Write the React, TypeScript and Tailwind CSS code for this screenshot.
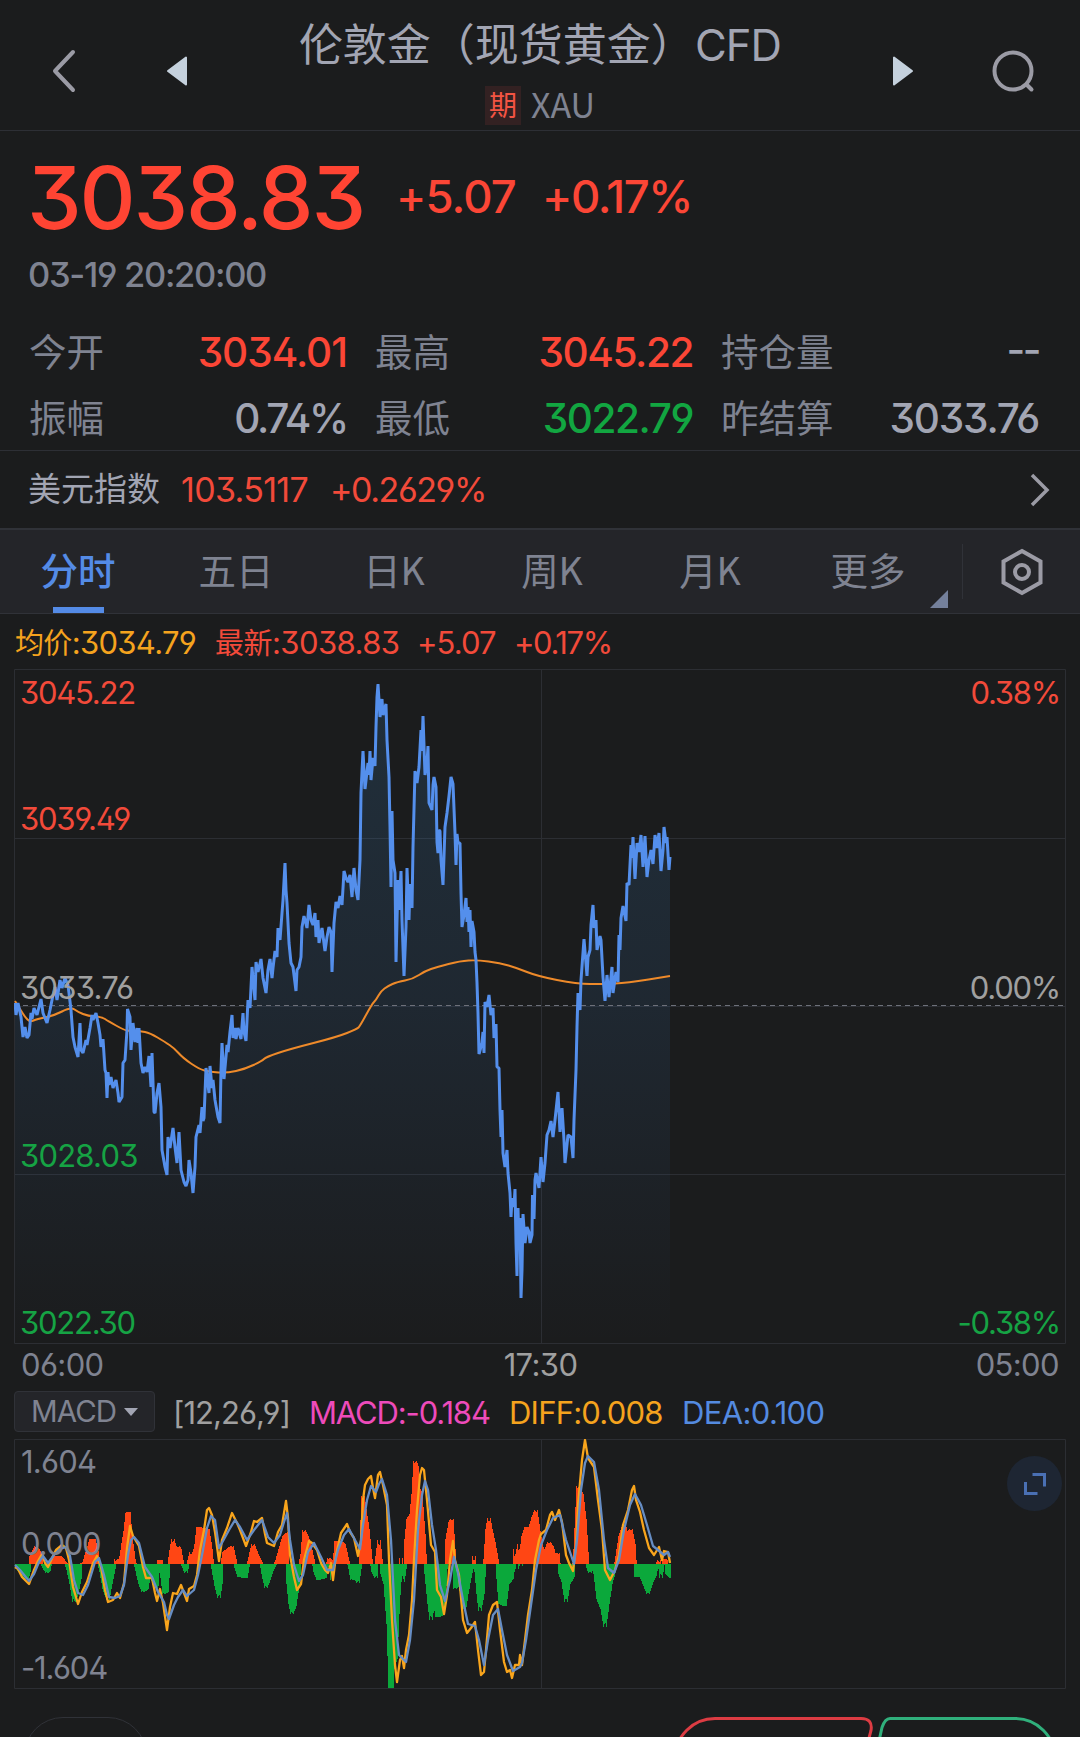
import { ReactNode } from 'react'
import clsx from 'clsx'

type Point = [number, number]

const parse = (s: string): Point[] => s.trim().split(/\s+/).map((p) => p.split(',').map(Number) as Point)

const PRICE = parse(`
15,1003 16,1015 18,1003 21,1017 23,1037 25,1027 27,1038 29,1035 31,1013 32,1019 34,1008 37,1015 41,999 43,1013
47,1023 50,1010 53,995 55,987 57,1000 60,980 62,988 65,978 68,985 69,993 71,1010 73,1037 75,1047 78,1057 80,1023
81,1050 83,1053 86,1040 87,1045 90,1028 92,1015 93,1020 96,1013 98,1023 100,1035 101,1047 103,1039 105,1070
106,1073 107,1098 108,1072 109,1085 111,1077 113,1088 116,1080 118,1093 119,1102 122,1097 123,1063 125,1060
127,1030 127.5,1009 130,1017 131,1050 133,1023 135,1042 137,1028 138,1043 139,1028 141,1063 143,1073 145,1067
147,1072 149,1056 151,1087 152,1053 154,1112 155,1113 157,1093 159,1083 161,1107 162,1150 165,1167 167,1175
168,1137 170,1148 173,1128 175,1147 177,1163 179,1132 181,1170 184,1182 186,1186 188,1180 189,1160 191,1173
193,1193 195,1167 196,1137 199,1125 200,1133 202,1107 203,1121 204,1118 206,1068 209,1093 210,1066 212,1088
213,1080 215,1100 218,1117 220,1123 221,1070 222,1043 224,1079 227,1045 228,1052 230,1032 232,1015 233,1038
235,1028 236,1039 238,1028 241,1039 243,1013 244,1032 246,1041 248,1000 250,1008 252,967 255,1000 256,962 258,972
261,959 263,978 266,993 268,970 270,959 272,978 273,968 275,951 277,957 278,928 280,940 282,913 283,900 285,863
286,890 287,903 289,943 291,963 293,967 296,991 297,970 299,967 301,957 302,927 304,916 307,928 309,905 311,920
313,925 315,913 316,937 318,920 319,943 322,928 325,951 327,937 329,927 331,932 332,972 334,923 336,902 338,908
340,896 342,905 344,871 346,878 348,882 350,875 352,897 354,868 356,890 358,900 360,860 361,793 363,751 365,789
368,763 369,775 370,751 371,780 373,758 375,766 376,727 377,697 378,684 380,717 382,699 383,715 386,704 387,740
389,777 390,827 391,887 392,811 393,860 395,873 396,962 398,880 399,910 401,871 402,920 404,976 406,927 407,868
409,920 410,884 412,908 413,847 415,771 417,783 419,767 421,730 422,751 423,716 425,775 427,763 428,746 429,803
432,810 433,785 434,777 436,787 437,842 438,853 439,830 440,831 441,860 443,885 445,827 447,813 449,796 451,777
453,784 455,833 456,865 457,834 458,843 460,843 461,893 462,927 464,915 466,898 467,922 468,907 469,932 470,910
471,947 472,921 474,932 475,952 476,960 477,983 478,1013 479,1054 482,1043 483,1032 484,1053 485,1002 487,1007
489,995 491,1015 493,1008 494,1038 496,1024 497,1067 499,1068 500,1110 501,1137 502,1110 503,1153 505,1167
507,1150 508,1173 510,1193 511,1217 512,1198 514,1207 515,1189 516,1243 517,1276 518,1208 519,1247 520,1218
521,1298 522,1270 523,1214 525,1243 527,1227 529,1232 530,1243 532,1235 532.5,1195 534,1219 535,1180 536,1173
539,1188 541,1157 543,1182 545,1163 547,1135 549,1130 551,1121 553,1137 555,1120 558,1092 560,1132 562,1108
564,1140 565,1163 568,1135 571,1137 573,1158 574,1120 576,1070 577,1027 578,993 580,1010 581,980 584,939 587,976
588,957 590,950 591,925 593,905 594,928 596,920 597,950 600,936 601,940 603,977 605,1001 607,975 609,997 612,967
613,993 616,972 618,982 619,935 620,950 621,918 623,906 626,921 627,883 629,885 631,845 632,858 633,837 635,879
637,843 639,852 641,835 643,867 645,836 647,877 649,860 651,850 653,864 655,835 657,848 659,833 661,871 663,850
664,827 666,843 667,837 669,870 670,857`)

const AVERAGE = parse(`
15,1001 20,1009 25,1017 30,1022 37,1019 53,1016 71,1007 78,1012 88,1016 102,1017 108,1021 124,1030 130,1031
140,1031 150,1033 165,1042 174,1048 183,1058 199,1069 210,1072 227,1073 245,1069 262,1061 266,1057 290,1049
337,1037 357,1029 360,1026 372,1004 376,1000 381,991 388,986 397,982 413,979 425,971 437,967 460,961 477,960
500,963 517,968 537,976 577,984 603,984 627,983 670,976`)

// histogram heights, positive is above the zero line
const HISTOGRAM = parse(`
15,-1 17,-4 20,-8 25,-14 27,-15 29,-8 31,8 36,18 40,11 42,0 44,-4 47,-9 49,-7 51,4 54,8 60,8 66,1 68,-6 71,-20
74,-38 77,-30 80,-15 81,0 84,2 88,15 91,25 94,25 97,13 99,0 101,-8 104,-25 108,-36 111,-20 114,-5 116,5 118,0
121,8 125,33 127,51 129,52 131,28 134,5 136,-3 140,-20 143,-28 147,-25 149,-13 151,-9 155,-25 157,-22 159,4
161,4 161.5,-10 164,-30 167,-28 169,0 171,14 173,25 176,12 178,18 180,15 183,-2 186,-9 188,0 191,12 193,5 196,20
198,37 203,36 208,35 211,15 213,-5 216,-22 219,-34 221,-20 222,0 224,12 228,15 232,18 235,5 236,-4 239,-13
246,-14 248,-3 249,3 253,20 257,10 261,2 263,-10 266,-24 269,-16 272,-7 275,-1 277,4 280,15 284,28 287.5,32
288,-20 290,-40 292,-50 295,-42 298,-22 300,0 302,10 304,34 307,28 309,22 313,5 315,-8 318,-16 325,-14 327,-3
329,6 331,4 332,-16 334,-2 336,23 340,23 344,20 348,3 350,-5 352,-16 355,-14 358,-19 360,-5 361,20 363,68 365,55
368,35 371,5 373,-8 376,-14 377,8 379,24 381,5 382,-10 385,-20 388,-60 390,-124 392,-124 393,-105 396,-95
398,-50 400,-12 401,6 403,-18 405,-5 406,25 408,45 411,50 413,70 415,103 417,98 419,75 421,70 424,30 426,-10
429,-40 431,-56 434,-35 437,-53 441,-52 444,-38 446,-5 447,25 450,42 452,45 454,15 455,-25 459,-20 462,-30
464,-50 467,-30 470,-14 473,0 474,8 476,-8 478,-30 480,-47 483,-30 485,5 487,35 489,46 491,35 494,22 497,5
498,-15 500,-40 505,-42 508,-20 512,-15 514,0 515,15 517,-5 519,20 521,-2 523,28 526,37 530,36 533,47 536,54
538,40 541,20 544,10 549,22 552,18 555,8 558,11 560,-10 563,-18 566,-38 569,-20 573,-13 575,15 578,78 582,70
585,45 588,-4 590,-9 593,-3 595,-10 598,-35 602,-45 605,-63 608,-40 611,-20 615,-5 617,8 620,28 624,40 627,30
631,35 634,20 636,-13 641,-12 645,-22 648,-30 652,-18 655,-12 657,-1 659,4 661,-14 664,5 666,4 667,-10 671,-14`)

const DIFF = parse(`
15,1567 18,1569 22,1577 29,1584 34,1570 38,1561 42,1554 45,1563 48,1567 53,1556 56,1550 62,1545 66,1548 69,1560
73,1587 78,1604 82,1592 87,1582 93,1563 97,1556 101,1567 105,1590 108,1602 113,1600 117,1593 120,1598 124,1583
127,1548 130,1526 133,1536 139,1546 143,1567 146,1578 152,1578 155,1593 157,1601 160,1589 163,1603 167,1630
170,1607 173,1593 177,1594 181,1585 184,1593 187,1601 189,1589 194,1586 197,1575 200,1550 204,1530 207,1510
209,1508 212,1515 215,1532 219,1561 222,1540 227,1528 232,1513 237,1523 240,1530 246,1546 251,1532 254,1521
257,1522 262,1518 265,1534 267,1543 274,1546 278,1532 282,1525 286,1501 288,1518 290,1555 294,1577 297,1590
301,1584 304,1560 309,1541 312,1543 317,1550 321,1563 325,1570 328,1573 331,1563 333,1580 336,1555 341,1533
347,1524 350,1532 354,1538 358,1556 361,1540 363,1500 365,1485 368,1479 371,1476 373,1488 375,1498 378,1475
380,1472 383,1485 387,1505 389,1560 392,1620 395,1665 397,1682 400,1660 402,1656 404,1668 406,1650 409,1635
412,1600 414,1560 417,1510 420,1475 422,1468 424,1470 427,1500 431,1545 435,1552 437,1590 441,1597 444,1614
447,1595 450,1560 453,1541 455,1560 459,1575 463,1620 467,1633 471,1628 475,1622 478,1650 481,1675 484,1672
486,1650 489,1615 493,1605 497,1602 500,1630 504,1662 507,1672 510,1670 512,1678 515,1665 519,1665 520,1655
522,1665 525,1640 528,1615 532,1590 535,1560 539,1540 541,1534 546,1530 550,1515 552,1512 555,1520 559,1510
562,1522 566,1555 569,1563 573,1571 576,1545 578,1505 582,1460 585,1440 588,1458 594,1467 598,1500 602,1530
605,1570 610,1580 615,1570 619,1555 623,1525 628,1510 632,1490 634,1486 636,1500 640,1512 644,1530 649,1548
654,1555 659,1547 662,1560 664,1551 668,1552 670,1563`)

const DEA = parse(`
15,1565 20,1570 29,1581 34,1574 39,1562 43,1556 48,1563 54,1555 60,1549 66,1547 70,1556 74,1580 78,1593 83,1595
88,1585 95,1562 99,1558 104,1575 109,1597 115,1598 120,1596 124,1585 128,1555 131,1540 134,1537 139,1543
145,1567 152,1577 158,1592 164,1602 167,1615 169,1619 174,1605 178,1597 183,1590 187,1596 194,1590 198,1575
203,1550 207,1528 211,1516 215,1520 219,1548 223,1541 229,1530 235,1520 240,1527 247,1540 254,1530 262,1520
268,1537 274,1543 280,1535 284,1522 287,1513 290,1540 294,1565 299,1581 303,1575 308,1552 314,1543 321,1557
327,1570 333,1570 338,1550 344,1535 349,1529 355,1540 360,1549 363,1525 367,1500 371,1486 376,1492 379,1484
382,1479 387,1495 391,1540 395,1620 399,1655 402,1658 406,1662 410,1640 414,1600 418,1530 422,1495 425,1481
428,1490 432,1525 436,1550 440,1585 445,1601 450,1580 454,1557 458,1573 463,1600 468,1624 475,1626 479,1640
484,1665 488,1640 493,1615 498,1609 502,1630 507,1655 513,1671 520,1667 522,1663 526,1640 531,1605 536,1570
541,1545 547,1530 553,1518 560,1515 566,1540 574,1564 577,1540 581,1490 585,1463 588,1456 594,1462 599,1490
604,1540 608,1568 614,1573 619,1560 624,1530 630,1505 635,1494 641,1505 647,1525 653,1546 658,1550 664,1555
668,1552 670,1557`)

const toLine = (points: Point[]) => 'M' + points.map((p) => p.join(' ')).join('L')

// rounds the corners by running quadratic curves through the segment midpoints
function toCurve(points: Point[]) {
    let d = `M${points[0].join(' ')}`
    for (let i = 1; i < points.length - 1; i++) {
        const [x, y] = points[i]
        const [nx, ny] = points[i + 1]
        d += `Q${x} ${y} ${(x + nx) / 2} ${(y + ny) / 2}`
    }
    return d + `L${points[points.length - 1].join(' ')}`
}

const ZERO = 1564

function valueAt(points: Point[], x: number) {
    const i = points.findIndex((p) => p[0] >= x)
    if (i <= 0) return points[i === 0 ? 0 : points.length - 1][1]
    const [x0, y0] = points[i - 1]
    const [x1, y1] = points[i]
    return y0 + ((y1 - y0) * (x - x0)) / (x1 - x0)
}

// bars are a bit wider than their step, so the taller neighbour wins
function histogramPath(sign: 1 | -1) {
    let d = `M15 ${ZERO}`
    for (let x = 15; x < 671; x++) {
        const near = [x - 1, x + 0.5, x + 2].map((at) => valueAt(HISTOGRAM, at) * sign)
        const h = Math.max(0, Math.round(Math.max(...near)))
        d += `V${ZERO - h * sign}H${x + 1}`
    }
    return d + `V${ZERO}z`
}

const TABS = ['分时', '五日', '日K', '周K', '月K', '更多']

interface StatProps {
    label: string
    value: string
    color?: string
}

function Stat({ label, value, color = 'text-[#a2a5b3]' }: StatProps) {
    return (
        <div className="flex h-[66px] items-center justify-between">
            <span className="-mt-[7px] font-['Noto_Sans_CJK_SC',sans-serif] text-[37.5px] text-[#7f8391]">{label}</span>
            <span className={clsx('text-[40.5px] font-medium', color)}>{value}</span>
        </div>
    )
}

function AxisLabel({ className, children }: { className: string; children: ReactNode }) {
    return <span className={clsx('absolute text-[31px] tracking-[-0.04em]', className)}>{children}</span>
}

function Header() {
    return (
        <header className="flex h-[131px] items-start justify-between border-b border-[#2d2f35] pr-[45px] pl-[51px]">
            <div className="flex h-[141px] items-center gap-[90px]">
                <svg width="25" height="46" viewBox="0 0 25 46" fill="none" stroke="#9b9ba5" strokeWidth="4" strokeLinecap="round" strokeLinejoin="round">
                    <path d="M22 4L4 23l18 19" />
                </svg>
                <svg width="22" height="32" viewBox="0 0 22 32" fill="#c5d1dd" stroke="#c5d1dd" strokeWidth="2" strokeLinejoin="round">
                    <path d="M20 2.500v27L2 16z" />
                </svg>
            </div>
            <div className="flex flex-col items-center pt-[14px]">
                <h1 className="h-[56px] font-['Noto_Sans_CJK_SC',sans-serif] text-[44px] leading-[56px] text-[#a2a5b3]">
                    伦敦金（现货黄金）
                    <span className="font-['Inter',sans-serif] text-[43.5px] tracking-[-0.02em]">CFD</span>
                </h1>
                <div className="mt-[16px] flex h-[38px] items-center gap-[10px]">
                    <span className="flex h-[39px] w-[36px] items-center justify-center bg-[#332122] pb-[2px] font-['Noto_Sans_CJK_SC',sans-serif] text-[28px] text-[#f45443]">
                        期
                    </span>
                    <span className="-mt-[3px] font-['Noto_Sans_CJK_SC',sans-serif] text-[34px] text-[#7f8391]">XAU</span>
                </div>
            </div>
            <div className="flex h-[141px] items-center gap-[77px]">
                <svg width="22" height="32" viewBox="0 0 22 32" fill="#c5d1dd" stroke="#c5d1dd" strokeWidth="2" strokeLinejoin="round">
                    <path d="M2 2.500v27L20 16z" />
                </svg>
                <svg width="44" height="46" viewBox="0 0 44 46" fill="none" stroke="#9b9ba5" strokeWidth="4" strokeLinecap="round">
                    <circle cx="22" cy="23" r="18.500" />
                    <path d="M35.500 36.500l5 5" />
                </svg>
            </div>
        </header>
    )
}

function Quote() {
    return (
        <section className="h-[320px] border-b border-[#2d2f35] pr-[41px] pl-[29px]">
            <div className="flex h-[132px] items-center text-[#ff4433]">
                <span className="-ml-[2px] w-[369px] text-[87px] font-medium tracking-[-0.025em]">3038.83</span>
                <span className="w-[146px] text-[45.5px] font-medium tracking-[-0.02em] text-[#fb4636]">+5.07</span>
                <span className="text-[45.5px] font-medium tracking-[-0.03em] text-[#fb4636]">+0.17%</span>
            </div>
            <div className="-ml-px text-[34.5px] font-medium leading-[24px] tracking-[-0.038em] text-[#7f8391]">03-19 20:20:00</div>
            <div className="mt-[33px] grid grid-cols-3 gap-x-[28px]">
                <Stat label="今开" value="3034.01" color="tracking-[-0.025em] text-[#fb4636]" />
                <Stat label="最高" value="3045.22" color="tracking-[-0.035em] text-[#fb4636]" />
                <Stat label="持仓量" value="--" color="tracking-[-0.06em] -mt-[5px] text-[#a2a5b3]" />
                <Stat label="振幅" value="0.74%" color="tracking-[-0.055em] text-[#a2a5b3]" />
                <Stat label="最低" value="3022.79" color="tracking-[-0.035em] text-[#12a641]" />
                <Stat label="昨结算" value="3033.76" color="tracking-[-0.03em] text-[#a2a5b3]" />
            </div>
        </section>
    )
}

function DollarIndex() {
    return (
        <section className="flex h-[77px] items-center pr-[29px] pl-[28px]">
            <span className="-mt-1 w-[153px] font-['Noto_Sans_CJK_SC',sans-serif] text-[33px] text-[#a2a5b3]">美元指数</span>
            <span className="w-[149px] text-[34px] tracking-[-0.02em] text-[#f24a3a]">103.5117</span>
            <span className="text-[34px] tracking-[-0.042em] text-[#f24a3a]">+0.2629%</span>
            <svg className="ml-auto" width="22" height="34" viewBox="0 0 22 34" fill="none" stroke="#9b9ba5" strokeWidth="3.5">
                <path d="M3 2l15 15L3 32" />
            </svg>
        </section>
    )
}

function Tabs() {
    return (
        <nav className="flex h-[86px] border-t-2 border-b border-t-[#303238] border-b-[#303238] bg-[#242529]">
            <div className="grid w-[948px] grid-cols-6">
                {TABS.map((tab, i) => (
                    <div key={tab} className="relative flex items-center justify-center pr-[2px] pb-[5px]">
                        <span
                            className={clsx(
                                "font-['Noto_Sans_CJK_SC',sans-serif] text-[37.5px]",
                                i === 0 ? 'font-medium text-[#548be6]' : 'text-[#7f8391]',
                            )}
                        >
                            {tab}
                        </span>
                        {i === 0 && <span className="absolute bottom-0 left-[53px] h-[6px] w-[51px] bg-[#548be6]" />}
                        {tab === '更多' && (
                            <svg className="absolute right-0 bottom-[5px]" width="18" height="18" viewBox="0 0 18 18" fill="#74809b">
                                <path d="M18 0v18H0z" />
                            </svg>
                        )}
                    </div>
                ))}
            </div>
            <div className="mt-[14px] ml-[14px] h-[55px] w-px bg-[#303238]" />
            <div className="flex flex-1 items-center justify-center pt-[1px]">
                <svg width="44" height="48" viewBox="0 0 44 48" fill="none" stroke="#9b9ba5" strokeWidth="4">
                    <path d="M22 3l18.500 10.500v21L22 45 3.500 34.500v-21z" />
                    <circle cx="22" cy="24" r="7" />
                </svg>
            </div>
        </nav>
    )
}

function PriceChart() {
    const line = toLine(PRICE)
    return (
        <section className="px-[14px]">
            <div className="relative h-[675px]">
                <svg className="block" width="1052" height="675" viewBox="14 669 1052 675" fill="none">
                    <defs>
                        <linearGradient id="area" gradientUnits="userSpaceOnUse" x1="0" y1="684" x2="0" y2="1344">
                            <stop offset="0" stopColor="#3d8fd0" stopOpacity="0.17" />
                            <stop offset="0.5" stopColor="#3d85d0" stopOpacity="0.11" />
                            <stop offset="1" stopColor="#3d7fd0" stopOpacity="0" />
                        </linearGradient>
                    </defs>
                    <path d="M14.500 669.500h1051v674h-1051zM14 838.500h1052M14 1006.500h1052M14 1174.500h1052M541.500 669v675" stroke="#2c2e33" />
                    <path d={`${line}V1343H15z`} fill="url(#area)" />
                    <path d="M14 1005.500h1052" stroke="#6d7079" strokeDasharray="5 4" />
                    <path d={toCurve(AVERAGE)} stroke="#ee8a2a" strokeWidth="2" />
                    <path d={line} stroke="#548fec" strokeWidth="3" strokeLinejoin="bevel" />
                </svg>
                <AxisLabel className="top-[8px] left-[6px] text-[#f24a3a]">3045.22</AxisLabel>
                <AxisLabel className="top-[134px] left-[6px] text-[#f24a3a]">3039.49</AxisLabel>
                <AxisLabel className="top-[303px] left-[6px] tracking-[-0.025em] text-[#a0a0a0]">3033.76</AxisLabel>
                <AxisLabel className="top-[471px] left-[6px] tracking-[-0.025em] text-[#16a344]">3028.03</AxisLabel>
                <AxisLabel className="top-[638px] left-[6px] text-[#16a344]">3022.30</AxisLabel>
                <AxisLabel className="top-[8px] right-[6px] text-[#f24a3a]">0.38%</AxisLabel>
                <AxisLabel className="top-[303px] right-[6px] text-[#a0a0a0]">0.00%</AxisLabel>
                <AxisLabel className="top-[638px] right-[6px] text-[#16a344]">-0.38%</AxisLabel>
            </div>
            <div className="grid h-[43px] grid-cols-3 items-center px-[7px] pb-[2px] text-[31px] tracking-[-0.02em] text-[#7f8391]">
                <span>06:00</span>
                <span className="pl-px text-center text-[#a0a0a0]">17:30</span>
                <span className="text-right">05:00</span>
            </div>
        </section>
    )
}

function MacdChart() {
    return (
        <section className="px-[14px] pt-[4px]">
            <div className="flex h-[41px] items-center text-[31px] tracking-[-0.03em]">
                <div className="flex h-[41px] w-[141px] items-center gap-[8px] rounded-[4px] border border-[#303238] bg-[#242529] pt-px pl-[16px] text-[29.5px] text-[#7f8391]">
                    MACD
                    <svg width="14" height="8" viewBox="0 0 14 8" fill="#a2a5b3">
                        <path d="M0 0h14L7 8z" />
                    </svg>
                </div>
                <span className="ml-[18px] w-[136px] pt-[2px] text-[#a0a0a0]">[12,26,9]</span>
                <span className="w-[200px] pt-[2px] tracking-[-0.037em] text-[#ee4bbb]">MACD:-0.184</span>
                <span className="w-[173px] pt-[2px] tracking-[-0.025em] text-[#f5a31e]">DIFF:0.008</span>
                <span className="pt-[2px] tracking-[-0.02em] text-[#548be0]">DEA:0.100</span>
            </div>
            <div className="relative mt-[7px] h-[250px]">
                <svg className="block" width="1052" height="250" viewBox="14 1439 1052 250" fill="none">
                    <path d="M14.500 1439.500h1051v249h-1051zM541.500 1439v250" stroke="#2c2e33" />
                    <path d={histogramPath(1)} fill="#ff4614" />
                    <path d={histogramPath(-1)} fill="#0ba83b" />
                    <path d={toLine(DIFF)} stroke="#f9a51c" strokeWidth="2.300" strokeLinejoin="round" />
                    <path d={toLine(DEA)} stroke="#668dc4" strokeWidth="2.300" strokeLinejoin="round" />
                </svg>
                <AxisLabel className="top-[7px] left-[7px] tracking-[-0.025em] text-[#7f8391]">1.604</AxisLabel>
                <AxisLabel className="top-[89px] left-[7px] tracking-[-0.01em] text-[#7f8391]">0.000</AxisLabel>
                <AxisLabel className="top-[213px] left-[7px] text-[#7f8391]">-1.604</AxisLabel>
                <div className="absolute top-[17px] right-[4px] flex size-[55px] items-center justify-center rounded-full bg-[#1e2633]">
                    <svg width="24" height="24" viewBox="0 0 24 24" fill="none" stroke="#4a70b4" strokeWidth="3">
                        <path d="M9.500 2.500h12v12M2.500 10v11.500h12" />
                    </svg>
                </div>
            </div>
        </section>
    )
}

function BottomBar() {
    return (
        <footer className="flex h-[48px] items-start overflow-hidden pt-[28px]">
            <div className="ml-[24px] h-[78px] w-[123px] shrink-0 rounded-[39px] border border-[#303238]" />
            <svg className="ml-[524px] shrink-0" width="400" height="84" viewBox="671 1717 400 84" fill="none" strokeWidth="3">
                <path d="M715 1718.500H861q12 0 10 12l-18 68H715a40 40 0 0 1 0-80z" stroke="#dd3c43" />
                <path d="M890 1718.500H1015a40 40 0 0 1 0 80H868l12-62 2-9q3-9 8-9z" stroke="#30b07c" />
            </svg>
        </footer>
    )
}

export default function App() {
    return (
        <div className="h-[1737px] w-[1080px] overflow-hidden bg-[#1b1c1d] font-['Inter','Noto_Sans_CJK_SC',sans-serif] leading-none whitespace-nowrap [font-feature-settings:'cv09','ss01']">
            <Header />
            <Quote />
            <DollarIndex />
            <Tabs />
            <div className="flex h-[55px] items-center pt-[1px] pl-[15px] text-[31px] tracking-[-0.022em] text-[#f24a3a]">
                <span className="w-[200px] text-[#f5a31e]">
                    <span className="text-[29px]">均价</span>:3034.79
                </span>
                <span className="w-[202px] tracking-[-0.018em]">
                    <span className="text-[29px]">最新</span>:3038.83
                </span>
                <span className="w-[97px] tracking-[-0.03em]">+5.07</span>
                <span className="tracking-[-0.045em]">+0.17%</span>
            </div>
            <PriceChart />
            <MacdChart />
            <BottomBar />
        </div>
    )
}
